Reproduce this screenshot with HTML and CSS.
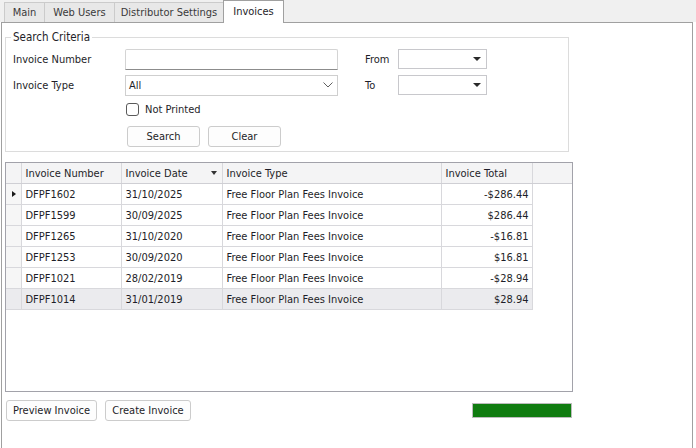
FILE: index.html
```html
<!DOCTYPE html>
<html lang="en">
<head>
  <meta charset="UTF-8">
  <title>Invoices</title>
  <link rel="stylesheet" href="styles.css">
</head>
<body>
  <div class="tabs">
    <div class="tab tab-main">Main</div>
    <div class="tab tab-web">Web Users</div>
    <div class="tab tab-dist">Distributor Settings</div>
    <div class="tab tab-inv active">Invoices</div>
  </div>

  <div class="panel">
    <fieldset class="criteria">
      <legend>Search Criteria</legend>
      <div class="form">
        <label>Invoice Number</label>
        <input class="text" type="text">
        <span></span>
        <label>From</label>
        <div class="date"><span class="drop"></span></div>

        <label>Invoice Type</label>
        <div class="combo">All
          <svg width="10" height="6" viewBox="0 0 10 6"><path d="M0.5 0.5 L5 5 L9.5 0.5" fill="none" stroke="#606060" stroke-width="1"/></svg>
        </div>
        <span></span>
        <label>To</label>
        <div class="date"><span class="drop"></span></div>

        <span></span>
        <div class="check"><span class="box"></span>Not Printed</div>
        <span></span><span></span><span></span>

        <span></span>
        <div class="buttons">
          <button class="btn">Search</button>
          <button class="btn">Clear</button>
        </div>
      </div>
    </fieldset>

    <div class="grid">
      <table>
        <colgroup>
          <col class="c-ind"><col class="c-num"><col class="c-date"><col class="c-type"><col class="c-total"><col>
        </colgroup>
        <thead>
          <tr>
            <th></th>
            <th>Invoice Number</th>
            <th><div class="sorted">Invoice Date<span class="sort"></span></div></th>
            <th>Invoice Type</th>
            <th>Invoice Total</th>
            <th class="filler"></th>
          </tr>
        </thead>
        <tbody>
          <tr>
            <td class="ind"><span class="cur"></span></td>
            <td>DFPF1602</td><td>31/10/2025</td><td>Free Floor Plan Fees Invoice</td><td class="amt">-$286.44</td><td class="filler"></td>
          </tr>
          <tr>
            <td class="ind"></td>
            <td>DFPF1599</td><td>30/09/2025</td><td>Free Floor Plan Fees Invoice</td><td class="amt">$286.44</td><td class="filler"></td>
          </tr>
          <tr>
            <td class="ind"></td>
            <td>DFPF1265</td><td>31/10/2020</td><td>Free Floor Plan Fees Invoice</td><td class="amt">-$16.81</td><td class="filler"></td>
          </tr>
          <tr>
            <td class="ind"></td>
            <td>DFPF1253</td><td>30/09/2020</td><td>Free Floor Plan Fees Invoice</td><td class="amt">$16.81</td><td class="filler"></td>
          </tr>
          <tr>
            <td class="ind"></td>
            <td>DFPF1021</td><td>28/02/2019</td><td>Free Floor Plan Fees Invoice</td><td class="amt">-$28.94</td><td class="filler"></td>
          </tr>
          <tr class="hover">
            <td class="ind"></td>
            <td>DFPF1014</td><td>31/01/2019</td><td>Free Floor Plan Fees Invoice</td><td class="amt">$28.94</td><td class="filler"></td>
          </tr>
        </tbody>
      </table>
    </div>

    <div class="actions">
      <button class="btn btn-preview">Preview Invoice</button>
      <button class="btn btn-create">Create Invoice</button>
      <div class="progress"></div>
    </div>
  </div>
</body>
</html>
```

FILE: styles.css
```css
body {
  margin: 0;
  background: #ffffff;
  font-family: "DejaVu Sans Condensed", "DejaVu Sans", sans-serif;
  font-stretch: condensed;
  font-size: 11px;
  color: #1e1e28;
}

/* tab strip */
.tabs {
  display: flex;
  align-items: flex-end;
  height: 22px;
  padding-left: 4px;
  background: #f0f0f0;
}
.tab {
  box-sizing: border-box;
  height: 20px;
  line-height: 19px;
  text-align: center;
  background: #e8e8e8;
  border: 1px solid #cbcbcb;
  border-bottom: none;
  border-right: none;
  color: #3a3a3a;
}
.tab-main { width: 40px; }
.tab-web { width: 70px; }
.tab-dist { width: 109px; }
.tab-inv { width: 61px; }
.tab.active {
  position: relative;
  z-index: 1;
  height: 23px;
  margin-bottom: -1px;
  line-height: 21px;
  background: #ffffff;
  border: 1px solid #a0a0a0;
  border-bottom: none;
  color: #1e1e28;
}

.panel {
  box-sizing: border-box;
  width: 692px;
  height: 426px;
  margin-left: 1px;
  border: 1px solid #a0a0a0;
  border-bottom: none;
  background: #ffffff;
  overflow: hidden;
}

/* search criteria group */
.criteria {
  box-sizing: border-box;
  width: 564px;
  margin: 8px 0 0 3px;
  padding: 5px 7px 5px 7px;
  border: 1px solid #dcdcdc;
}
.criteria legend {
  padding: 0 2px;
  margin-left: -2px;
  line-height: 13px;
  font-size: 11.5px;
}
.form {
  display: grid;
  grid-template-columns: 112px 213px 27px 33px 89px;
  grid-template-rows: 20px 20px 19px 20px;
  row-gap: 6px;
  align-items: center;
}
.text {
  box-sizing: border-box;
  width: 213px;
  height: 21px;
  margin: 0;
  border: 1px solid #d4d4d4;
  border-bottom-color: #8c8c8c;
  border-radius: 2px 2px 0 0;
  outline: none;
}
.combo {
  box-sizing: border-box;
  height: 21px;
  display: flex;
  align-items: center;
  justify-content: space-between;
  padding: 0 4px 0 3px;
  border: 1px solid #cfcfcf;
  background: #ffffff;
}
.date {
  box-sizing: border-box;
  height: 20px;
  align-self: start;
  display: flex;
  align-items: center;
  justify-content: flex-end;
  padding-right: 5px;
  border: 1px solid #c8c8cc;
}
.drop {
  width: 0;
  height: 0;
  border-left: 4px solid transparent;
  border-right: 4px solid transparent;
  border-top: 4px solid #2a2a2a;
}
.check {
  display: flex;
  align-items: center;
  gap: 6px;
  margin-left: 1px;
  align-self: start;
  margin-top: 2px;
  height: 13px;
}
.box {
  box-sizing: border-box;
  width: 13px;
  height: 13px;
  border: 1px solid #5a5a5a;
  border-radius: 3px;
  background: #ffffff;
}
.buttons {
  display: flex;
  gap: 8px;
  padding-left: 2px;
}
.btn {
  box-sizing: border-box;
  height: 21px;
  margin: 0;
  padding: 0;
  font: inherit;
  color: inherit;
  background: #fdfdfd;
  border: 1px solid #cccccc;
  border-radius: 3px;
}
.buttons .btn { width: 73px; }

/* invoices grid */
.grid {
  box-sizing: border-box;
  width: 568px;
  height: 230px;
  margin: 10px 0 0 3px;
  border: 1px solid #a2a2aa;
  background: #ffffff;
}
table {
  width: 566px;
  border-collapse: collapse;
  table-layout: fixed;
}
.c-ind { width: 15px; }
.c-num { width: 100px; }
.c-date { width: 101px; }
.c-type { width: 219px; }
.c-total { width: 91px; }
th, td {
  height: 20px;
  padding: 0 4px;
  text-align: left;
  font-weight: normal;
  white-space: nowrap;
  border-right: 1px solid #d8d8dc;
  border-bottom: 1px solid #d8d8dc;
}
th {
  background: #f4f4f5;
  border-bottom-color: #cfcfd4;
}
th.filler { border-right: none; }
td.filler { border: none; background: #ffffff; }
.sorted {
  display: flex;
  align-items: center;
  justify-content: space-between;
  padding-right: 1px;
}
.sort {
  width: 0;
  height: 0;
  border-left: 3.5px solid transparent;
  border-right: 3.5px solid transparent;
  border-top: 4px solid #333333;
}
.ind {
  padding: 0;
  background: #f6f6f6;
}
.cur {
  display: block;
  width: 0;
  height: 0;
  margin-left: 6px;
  border-top: 3.5px solid transparent;
  border-bottom: 3.5px solid transparent;
  border-left: 4px solid #1a1a1a;
}
.amt { text-align: right; padding-right: 3px; }
tr.hover td { background: #ebebee; }
tr.hover td.filler { background: #ffffff; }

/* bottom actions */
.actions {
  display: flex;
  align-items: center;
  width: 567px;
  margin: 8px 0 0 4px;
}
.btn-preview { width: 91px; }
.btn-create { width: 86px; margin-left: 8px; }
.progress {
  box-sizing: border-box;
  width: 100px;
  height: 15px;
  margin-left: auto;
  margin-right: 1px;
  background: #107c10;
  border: 1px solid #bcbcbc;
}
```
